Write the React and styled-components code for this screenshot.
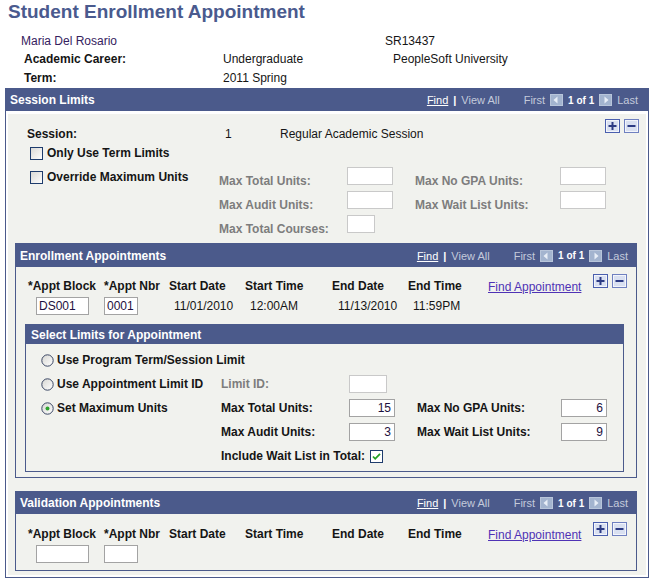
import React from "react";
import styled, { createGlobalStyle } from "styled-components";

const BLUE = "#4b5a8b";
const GRAY = "#f1f2ee";

export default function App() {
  return (
    <Page>
      <GlobalStyle />
      <Title>Student Enrollment Appointment</Title>

      <InfoRow $h={18}>
        <InfoText $indent={21} $purple>Maria Del Rosario</InfoText>
        <span />
        <InfoText>SR13437</InfoText>
      </InfoRow>
      <InfoRow $h={19}>
        <InfoText $indent={24} $bold>Academic Career:</InfoText>
        <InfoText>Undergraduate</InfoText>
        <InfoText $indent={8}>PeopleSoft University</InfoText>
      </InfoRow>
      <InfoRow $h={19}>
        <InfoText $indent={24} $bold>Term:</InfoText>
        <InfoText>2011 Spring</InfoText>
      </InfoRow>

      <OuterPanel>
        <PanelHeader $h={22} $pr={10}>
          <HeaderTitle>Session Limits</HeaderTitle>
          <Nav />
        </PanelHeader>

        <OuterBody>
          <SessionRow>
            <Label $top={6}>Session:</Label>
            <Value $top={6}>1</Value>
            <Value $top={6}>Regular Academic Session</Value>
            <AddRemove />
          </SessionRow>

          <CheckRow>
            <CheckBox />
            <Label>Only Use Term Limits</Label>
          </CheckRow>

          <FieldGrid>
            <CheckRow $inline>
              <CheckBox />
              <Label>Override Maximum Units</Label>
            </CheckRow>
            <Label $muted $top={5}>Max Total Units:</Label>
            <Field $w={46} $disabled />
            <Label $muted $top={5}>Max No GPA Units:</Label>
            <Field $w={46} $disabled />

            <span />
            <Label $muted $top={5}>Max Audit Units:</Label>
            <Field $w={46} $disabled />
            <Label $muted $top={5}>Max Wait List Units:</Label>
            <Field $w={46} $disabled />

            <span />
            <Label $muted $top={5}>Max Total Courses:</Label>
            <Field $w={28} $disabled />
          </FieldGrid>

          <Panel $margin="4px 9px 0 7px">
            <PanelHeader $h={23}>
              <HeaderTitle>Enrollment Appointments</HeaderTitle>
              <Nav />
            </PanelHeader>
            <PanelBody $pb={5}>
              <ApptGrid $pt={10}>
                <ApptHead />
                <Field $w={53} $left={8}>DS001</Field>
                <Field $w={34}>0001</Field>
                <Value $left={5}>11/01/2010</Value>
                <Value $left={5}>12:00AM</Value>
                <Value $left={6}>11/13/2010</Value>
                <Value $left={5}>11:59PM</Value>
              </ApptGrid>

              <Panel $margin="9px 12px 0 9px">
                <PanelHeader $h={19} $pl={5}>
                  <HeaderTitle>Select Limits for Appointment</HeaderTitle>
                </PanelHeader>
                <LimitGrid>
                  <RadioOption $wide>
                    <Radio />
                    <Label>Use Program Term/Session Limit</Label>
                  </RadioOption>

                  <RadioOption>
                    <Radio />
                    <Label>Use Appointment Limit ID</Label>
                  </RadioOption>
                  <Label $muted>Limit ID:</Label>
                  <Field $w={38} $disabled />
                  <span />
                  <span />

                  <RadioOption>
                    <Radio checked />
                    <Label>Set Maximum Units</Label>
                  </RadioOption>
                  <Label>Max Total Units:</Label>
                  <Field $w={46} $right>15</Field>
                  <Label>Max No GPA Units:</Label>
                  <Field $w={46} $right>6</Field>

                  <span />
                  <Label>Max Audit Units:</Label>
                  <Field $w={46} $right>3</Field>
                  <Label>Max Wait List Units:</Label>
                  <Field $w={46} $right>9</Field>

                  <span />
                  <IncludeRow>
                    <Label>Include Wait List in Total:</Label>
                    <CheckBox checked />
                  </IncludeRow>
                </LimitGrid>
              </Panel>
            </PanelBody>
          </Panel>

          <Panel $margin="13px 9px 0 7px">
            <PanelHeader $h={22}>
              <HeaderTitle>Validation Appointments</HeaderTitle>
              <Nav />
            </PanelHeader>
            <PanelBody $pb={7}>
              <ApptGrid $pt={11}>
                <ApptHead />
                <Field $w={53} $left={8} />
                <Field $w={34} />
              </ApptGrid>
            </PanelBody>
          </Panel>
        </OuterBody>
      </OuterPanel>
    </Page>
  );
}

function ApptHead() {
  return (
    <>
      <Label>*Appt Block</Label>
      <Label>*Appt Nbr</Label>
      <Label>Start Date</Label>
      <Label>Start Time</Label>
      <Label>End Date</Label>
      <Label>End Time</Label>
      <FindLink>Find Appointment</FindLink>
      <ButtonCell>
        <AddRemove />
      </ButtonCell>
    </>
  );
}

function Nav() {
  return (
    <NavBar>
      <NavFind>Find</NavFind>
      <NavPipe>|</NavPipe>
      <NavMuted>View All</NavMuted>
      <NavMuted $gap={19}>First</NavMuted>
      <ArrowIcon dir="left" />
      <NavCount>1 of 1</NavCount>
      <ArrowIcon dir="right" />
      <NavMuted>Last</NavMuted>
    </NavBar>
  );
}

function ArrowIcon({ dir }) {
  return (
    <Icon width="13" height="12" viewBox="0 0 13 12">
      <rect x="0" y="0" width="13" height="12" fill="#a3b4cf" />
      <rect x="0.5" y="0.5" width="12" height="11" fill="none" stroke="#b8c5da" />
      {dir === "left" ? (
        <polygon points="3.5,6 7.5,2.5 7.5,9.5" fill="#e8eef7" />
      ) : (
        <polygon points="9.5,6 5.5,2.5 5.5,9.5" fill="#e8eef7" />
      )}
    </Icon>
  );
}

function SquareButton({ plus }) {
  return (
    <Icon width="15" height="14" viewBox="0 0 15 14">
      <rect x="0.5" y="0.5" width="14" height="13" fill="#d9e0f1" stroke={plus ? "#4a5fae" : "#6f80c0"} />
      <rect x="1.5" y="1.5" width="12" height="11" fill="none" stroke="#f3f5fb" />
      <path d="M3.5 7h8" stroke="#2c3b84" strokeWidth="2" />
      {plus && <path d="M7.5 3v8" stroke="#2c3b84" strokeWidth="2" />}
    </Icon>
  );
}

function AddRemove() {
  return (
    <Buttons>
      <SquareButton plus />
      <SquareButton />
    </Buttons>
  );
}

function CheckBox({ checked }) {
  return (
    <Icon width="13" height="13" viewBox="0 0 13 13">
      <defs>
        <linearGradient id="cbg" x1="0" y1="0" x2="1" y2="1">
          <stop offset="0" stopColor="#d8d8d4" />
          <stop offset="1" stopColor="#ffffff" />
        </linearGradient>
      </defs>
      <rect x="0.5" y="0.5" width="12" height="12" fill={checked ? "#fff" : "url(#cbg)"} stroke="#1e3c6c" />
      {checked && (
        <path d="M3 6.5l2.2 2.3L10 3.8" fill="none" stroke="#23a023" strokeWidth="1.8" />
      )}
    </Icon>
  );
}

function Radio({ checked }) {
  return (
    <Icon width="13" height="13" viewBox="0 0 13 13">
      <defs>
        <linearGradient id="rbg" x1="0" y1="0" x2="1" y2="1">
          <stop offset="0" stopColor="#d6d6d2" />
          <stop offset="1" stopColor="#ffffff" />
        </linearGradient>
      </defs>
      <circle cx="6.5" cy="6.5" r="5.7" fill="url(#rbg)" stroke="#3a4764" />
      {checked && <circle cx="6.5" cy="6.5" r="2" fill="#2ea32e" />}
    </Icon>
  );
}

const GlobalStyle = createGlobalStyle`
  html, body { margin: 0; padding: 0; background: #fff; }
  body {
    font-family: "Liberation Sans", Arial, sans-serif;
    font-size: 12px;
    color: #151515;
  }
  * { box-sizing: border-box; }
`;

const Page = styled.div`
  width: 654px;
`;

const Icon = styled.svg`
  flex-shrink: 0;
  display: block;
`;

const Title = styled.h1`
  margin: 0;
  padding: 1px 0 0 8px;
  height: 32px;
  font-size: 19px;
  line-height: 22px;
  font-weight: bold;
  color: #4a5a8e;
`;

const InfoRow = styled.div`
  display: grid;
  grid-template-columns: 223px 162px 1fr;
  height: ${(p) => p.$h}px;
  line-height: ${(p) => p.$h}px;
`;

const InfoText = styled.span`
  padding-left: ${(p) => p.$indent || 0}px;
  font-weight: ${(p) => (p.$bold ? "bold" : "normal")};
  color: ${(p) => (p.$purple ? "#35215e" : "#151515")};
`;

const OuterPanel = styled.section`
  margin-left: 5px;
  width: 644px;
  border: 1px solid ${BLUE};
  background: #fff;
`;

const Panel = styled.section`
  margin: ${(p) => p.$margin || 0};
  border: 1px solid ${BLUE};
  background: ${GRAY};
`;

const PanelHeader = styled.div`
  display: flex;
  align-items: center;
  justify-content: space-between;
  height: ${(p) => p.$h}px;
  padding: 0 ${(p) => p.$pr || 8}px 0 ${(p) => p.$pl || 4}px;
  background: ${BLUE};
`;

const HeaderTitle = styled.span`
  color: #fff;
  font-weight: bold;
  font-size: 12px;
`;

const NavBar = styled.div`
  display: flex;
  align-items: center;
  gap: 5px;
  font-size: 11px;
`;

const NavFind = styled.span`
  color: #fff;
  text-decoration: underline;
`;

const NavPipe = styled.span`
  color: #fff;
  font-weight: bold;
`;

const NavMuted = styled.span`
  color: #c4cadb;
  margin-left: ${(p) => p.$gap || 0}px;
`;

const NavCount = styled.span`
  color: #fff;
  font-weight: bold;
  font-size: 10px;
`;

const OuterBody = styled.div`
  margin: 3px 2px 2px;
  padding: 5px 0 4px;
  background: ${GRAY};
`;

const SessionRow = styled.div`
  display: grid;
  grid-template-columns: 198px 55px 1fr auto;
  align-items: start;
  padding: 0 7px 0 19px;
`;

const Label = styled.span`
  font-weight: bold;
  line-height: 18px;
  white-space: nowrap;
  margin-top: ${(p) => p.$top || 0}px;
  color: ${(p) => (p.$muted ? "#7d7d7d" : "#151515")};
`;

const Value = styled.span`
  line-height: 18px;
  white-space: nowrap;
  margin-top: ${(p) => p.$top || 0}px;
  padding-left: ${(p) => p.$left || 0}px;
`;

const CheckRow = styled.div`
  display: flex;
  align-items: center;
  gap: 4px;
  height: 18px;
  margin: ${(p) => (p.$inline ? "1px 0 0" : "1px 0 0 22px")};
`;

const FieldGrid = styled.div`
  display: grid;
  grid-template-columns: 189px 128px 68px 145px 46px;
  grid-auto-rows: 24px;
  align-items: start;
  margin-top: 5px;
  padding-left: 22px;
`;

const Field = styled.div`
  width: ${(p) => p.$w}px;
  height: 18px;
  margin-left: ${(p) => p.$left || 0}px;
  padding: 0 3px 0 2px;
  border: 1px solid ${(p) => (p.$disabled ? "#c9c9c9" : "#a3a3a3")};
  background: #fff;
  line-height: 16px;
  text-align: ${(p) => (p.$right ? "right" : "left")};
  color: #1d1040;
`;

const PanelBody = styled.div`
  padding-bottom: ${(p) => p.$pb}px;
`;

const ApptGrid = styled.div`
  display: grid;
  grid-template-columns: 76px 65px 76px 87px 76px 80px 105px 1fr;
  grid-auto-rows: 18px;
  row-gap: 2px;
  align-items: center;
  padding: ${(p) => p.$pt}px 0 0 12px;
`;

const FindLink = styled.a`
  color: #4f33b5;
  text-decoration: underline;
  line-height: 18px;
  margin-top: 2px;
  white-space: nowrap;
  cursor: pointer;
`;

const ButtonCell = styled.div`
  align-self: start;
  margin-top: -3px;
`;

const Buttons = styled.div`
  display: flex;
  gap: 4px;
`;

const LimitGrid = styled.div`
  display: grid;
  grid-template-columns: 180px 128px 68px 144px 46px;
  grid-auto-rows: 24px;
  align-items: center;
  padding: 4px 0 3px 15px;
`;

const RadioOption = styled.div`
  display: flex;
  align-items: center;
  gap: 3px;
  grid-column: ${(p) => (p.$wide ? "1 / -1" : "auto")};
`;

const IncludeRow = styled.div`
  grid-column: 2 / 4;
  display: flex;
  align-items: center;
  gap: 5px;
`;
